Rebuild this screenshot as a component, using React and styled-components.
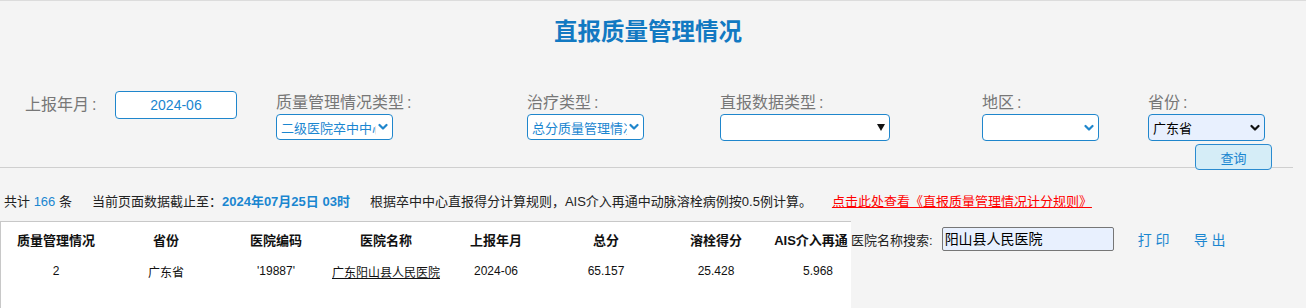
import React from 'react';
import styled, { createGlobalStyle } from 'styled-components';

const GlobalStyle = createGlobalStyle`
  html, body {
    margin: 0;
    padding: 0;
    background: #f4f4f4;
  }
  body {
    font-family: "Liberation Sans", "Noto Sans CJK SC", sans-serif;
  }
`;

const Page = styled.div`
  height: 308px;
  overflow: hidden;
  background: #f4f4f4;
  border-top: 1px solid #dcdcdc;
  box-sizing: border-box;
`;

const Title = styled.h1`
  margin: 16px 0 0;
  padding-right: 10px;
  height: 30px;
  line-height: 30px;
  text-align: center;
  font-size: 23.5px;
  font-weight: bold;
  color: #1279c2;
`;

const FilterRow = styled.div`
  display: grid;
  grid-template-columns: 251px 251px 193px 262px 166px 1fr;
  padding-left: 25px;
  margin-top: 46px;
`;

const FilterItem = styled.div`
  display: flex;
  flex-direction: ${p => (p.$inline ? 'row' : 'column')};
  align-items: ${p => (p.$inline ? 'center' : 'flex-start')};
  align-self: flex-start;
  margin-top: ${p => (p.$inline ? '-2px' : '0')};
`;

const Label = styled.label`
  font-size: 16px;
  line-height: 20px;
  color: #777;
  width: ${p => p.$width || 'auto'};
  margin-bottom: 1px;
  white-space: nowrap;
`;

const Colon = styled.span`
  margin-left: 3px;
`;

const DateInput = styled.div`
  width: 122px;
  height: 28px;
  box-sizing: border-box;
  border: 1px solid #1f86cc;
  border-radius: 4px;
  background: #fff;
  color: #1a86d0;
  font-size: 14px;
  line-height: 26px;
  text-align: center;
`;

const SelectBox = styled.div`
  width: ${p => p.$width || '117px'};
  height: ${p => (p.$tall ? '27px' : '26px')};
  box-sizing: border-box;
  border: 1px solid #1f86cc;
  border-radius: 4px;
  background: ${p => (p.$filled ? '#e8f0fe' : '#fff')};
  display: flex;
  align-items: center;
  padding: 0 4px;
  gap: 2px;
`;

const SelectText = styled.span`
  flex: 1;
  overflow: hidden;
  white-space: nowrap;
  font-size: 13px;
  color: ${p => p.$color || '#1a86d0'};
`;

const QueryButton = styled.button`
  position: relative;
  margin: 3px 0 -4px 47px;
  width: 77px;
  height: 26px;
  border: 1px solid #2a8bd0;
  border-radius: 4px;
  background: #d5edf7;
  color: #1a86d0;
  font-family: inherit;
  font-size: 13px;
  padding: 0;
`;

const Rule = styled.div`
  height: 1px;
  background: #cfcfcf;
  margin: 1px 13px 0 0;
`;

const InfoRow = styled.div`
  display: flex;
  align-items: center;
  gap: 20px;
  padding: 23px 0 0 4px;
  height: 18px;
  font-size: 13px;
  color: #222;
  white-space: nowrap;
`;

const Blue = styled.span`
  color: #1a86d0;
  font-weight: ${p => (p.$bold ? 'bold' : 'normal')};
`;

const RedLink = styled.a`
  color: #ff0000;
  text-decoration: underline;
`;

const Bottom = styled.div`
  display: flex;
  margin-top: 12px;
`;

const TableWrap = styled.div`
  width: 851px;
  height: 100px;
  flex-shrink: 0;
  box-sizing: border-box;
  background: #fff;
  border-top: 1px solid #c8c8c8;
  border-left: 1px solid #c8c8c8;
`;

const Table = styled.table`
  width: 850px;
  table-layout: fixed;
  border-collapse: collapse;
`;

const Th = styled.th`
  height: 34px;
  padding: 0;
  font-size: 13px;
  font-weight: bold;
  color: #111;
  text-align: center;
  white-space: nowrap;
  width: ${p => p.$w || '110px'};
`;

const Td = styled.td`
  height: 30px;
  padding: ${p => (p.$right ? '0 0 0 14px' : '0')};
  font-size: 12px;
  color: #111;
  text-align: center;
  white-space: nowrap;
`;

const HospitalLink = styled.a`
  color: #111;
  text-decoration: underline;
`;

const SearchArea = styled.div`
  display: flex;
  align-items: center;
  height: 24px;
  margin-top: 6px;
  font-size: 13px;
  color: #222;
  white-space: nowrap;
`;

const SearchInput = styled.div`
  width: 172px;
  height: 24px;
  box-sizing: border-box;
  margin-left: 9px;
  border: 1px solid #767676;
  border-radius: 2px;
  background: #e8f0fe;
  font-size: 14px;
  line-height: 22px;
  padding-left: 2px;
  color: #000;
`;

const ActionLink = styled.a`
  margin-left: ${p => p.$gap || '24px'};
  font-size: 14px;
  letter-spacing: 4px;
  color: #1a86d0;
`;

const Chevron = ({ color = '#1f86cc' }) => (
  <svg width="10" height="8" viewBox="0 0 10 8">
    <path d="M1.5 2 L5 5.5 L8.5 2" fill="none" stroke={color} strokeWidth="2.2" strokeLinecap="round" strokeLinejoin="round" />
  </svg>
);

const Triangle = () => (
  <svg width="8" height="7" viewBox="0 0 8 7">
    <path d="M0 0 H8 L4 7 Z" fill="#111" />
  </svg>
);

const rows = [
  { level: '2', province: '广东省', code: "'19887'", name: '广东阳山县人民医院', month: '2024-06', total: '65.157', lysis: '25.428', ais: '5.968' },
];

export default function App() {
  return (
    <>
      <GlobalStyle />
      <Page>
        <Title>直报质量管理情况</Title>

        <FilterRow>
          <FilterItem $inline>
            <Label $width="90px">上报年月<Colon>:</Colon></Label>
            <DateInput>2024-06</DateInput>
          </FilterItem>
          <FilterItem>
            <Label>质量管理情况类型<Colon>:</Colon></Label>
            <SelectBox>
              <SelectText>二级医院卒中中心</SelectText>
              <Chevron />
            </SelectBox>
          </FilterItem>
          <FilterItem>
            <Label>治疗类型<Colon>:</Colon></Label>
            <SelectBox>
              <SelectText>总分质量管理情况</SelectText>
              <Chevron />
            </SelectBox>
          </FilterItem>
          <FilterItem>
            <Label>直报数据类型<Colon>:</Colon></Label>
            <SelectBox $width="170px" $tall>
              <SelectText />
              <Triangle />
            </SelectBox>
          </FilterItem>
          <FilterItem>
            <Label>地区<Colon>:</Colon></Label>
            <SelectBox $tall>
              <SelectText />
              <Chevron />
            </SelectBox>
          </FilterItem>
          <FilterItem>
            <Label>省份<Colon>:</Colon></Label>
            <SelectBox $tall $filled>
              <SelectText $color="#000">广东省</SelectText>
              <Chevron color="#111" />
            </SelectBox>
            <QueryButton>查询</QueryButton>
          </FilterItem>
        </FilterRow>

        <Rule />

        <InfoRow>
          <span>共计 <Blue>166</Blue> 条</span>
          <span>当前页面数据截止至：<Blue $bold>2024年07月25日 03时</Blue></span>
          <span>根据卒中中心直报得分计算规则，AIS介入再通中动脉溶栓病例按0.5例计算。</span>
          <RedLink>点击此处查看《直报质量管理情况计分规则》 </RedLink>
        </InfoRow>

        <Bottom>
          <TableWrap>
            <Table>
              <thead>
                <tr>
                  <Th>质量管理情况</Th>
                  <Th>省份</Th>
                  <Th>医院编码</Th>
                  <Th>医院名称</Th>
                  <Th>上报年月</Th>
                  <Th>总分</Th>
                  <Th>溶栓得分</Th>
                  <Th $w="80px">AIS介入再通</Th>
                </tr>
              </thead>
              <tbody>
                {rows.map(r => (
                  <tr key={r.code}>
                    <Td>{r.level}</Td>
                    <Td>{r.province}</Td>
                    <Td>{r.code}</Td>
                    <Td><HospitalLink>{r.name}</HospitalLink></Td>
                    <Td>{r.month}</Td>
                    <Td>{r.total}</Td>
                    <Td>{r.lysis}</Td>
                    <Td $right>{r.ais}</Td>
                  </tr>
                ))}
              </tbody>
            </Table>
          </TableWrap>

          <SearchArea>
            <span>医院名称搜索:</span>
            <SearchInput>阳山县人民医院</SearchInput>
            <ActionLink>打印</ActionLink>
            <ActionLink $gap="20px">导出</ActionLink>
          </SearchArea>
        </Bottom>
      </Page>
    </>
  );
}
